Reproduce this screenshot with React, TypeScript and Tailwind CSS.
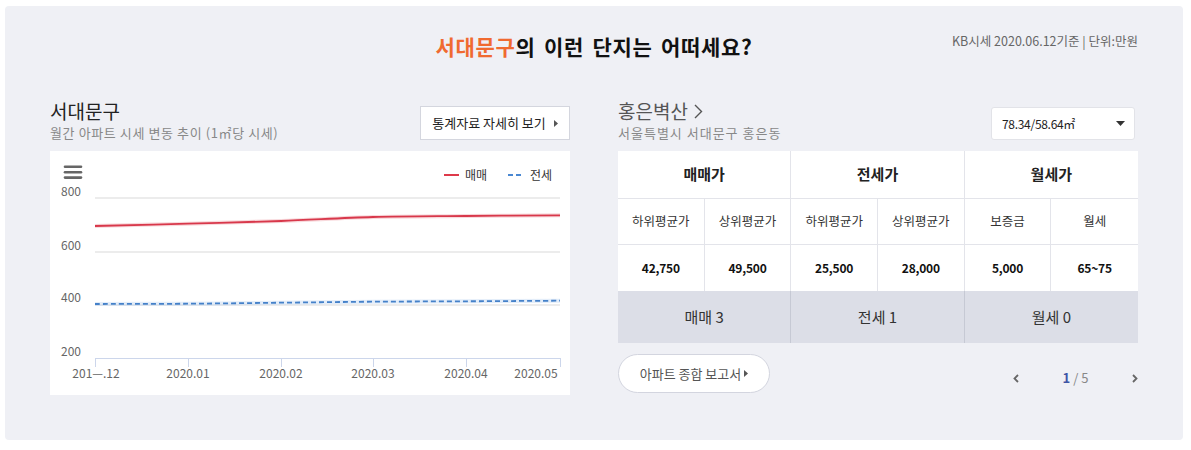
import React from 'react';

const FONT = "font-['Noto_Sans_CJK_KR','Noto_Sans',sans-serif]";

const xs = [45, 138, 231, 323, 416, 510];
const saleYs = [75, 72.7, 70, 66, 65, 64.3];
const jeonseYs = [153, 152.7, 151.7, 150.7, 150.3, 149.7];

function smoothPath(ys: number[]) {
  const pts = xs.map((x, i) => [x, ys[i]]);
  let d = `M${pts[0][0]},${pts[0][1]}`;
  for (let i = 0; i < pts.length - 1; i++) {
    const p0 = pts[i - 1] ?? pts[i];
    const p1 = pts[i];
    const p2 = pts[i + 1];
    const p3 = pts[i + 2] ?? p2;
    const c1x = p1[0] + (p2[0] - p0[0]) / 6;
    const c1y = p1[1] + (p2[1] - p0[1]) / 6;
    const c2x = p2[0] - (p3[0] - p1[0]) / 6;
    const c2y = p2[1] - (p3[1] - p1[1]) / 6;
    d += ` C${c1x},${c1y} ${c2x},${c2y} ${p2[0]},${p2[1]}`;
  }
  return d;
}

function TrendChart() {
  const gridYs = [47, 101, 154];
  const yLabels = [
    { t: '800', y: 45 },
    { t: '600', y: 99 },
    { t: '400', y: 151 },
    { t: '200', y: 205 },
  ];
  const xLabels = [
    { t: '201—.12', x: 46 },
    { t: '2020.01', x: 138 },
    { t: '2020.02', x: 231 },
    { t: '2020.03', x: 323 },
    { t: '2020.04', x: 416 },
    { t: '2020.05', x: 486 },
  ];
  return (
    <div className="mt-[9px] h-[244px] w-[520px] bg-white">
      <svg width="520" height="244" viewBox="0 0 520 244" className="block">
        <g stroke="#666" strokeWidth="2.6" strokeLinecap="round">
          <line x1="15" y1="15.7" x2="31" y2="15.7" />
          <line x1="15" y1="21.2" x2="31" y2="21.2" />
          <line x1="15" y1="26.6" x2="31" y2="26.6" />
        </g>
        <line x1="394" y1="24" x2="409" y2="24" stroke="#de3a4a" strokeWidth="2" />
        <text x="415" y="28.5" fontSize="12" fill="#333" fontFamily="Noto Sans CJK KR, sans-serif">매매</text>
        <line x1="458" y1="24" x2="474" y2="24" stroke="#4a88d2" strokeWidth="2" strokeDasharray="5 3" />
        <text x="480" y="28.5" fontSize="12" fill="#333" fontFamily="Noto Sans CJK KR, sans-serif">전세</text>

        {gridYs.map((y) => (
          <line key={y} x1="45" y1={y} x2="510" y2={y} stroke="#d9d9d9" strokeWidth="1" />
        ))}
        <line x1="45" y1="207.5" x2="510" y2="207.5" stroke="#ccd6eb" strokeWidth="1" />
        {xs.map((x) => (
          <line key={x} x1={x + 0.5} y1="207" x2={x + 0.5} y2="216" stroke="#ccd6eb" strokeWidth="1" />
        ))}

        {yLabels.map((l) => (
          <text key={l.t} x="11" y={l.y} fontSize="12" fill="#666" fontFamily="Noto Sans CJK KR, sans-serif">
            {l.t}
          </text>
        ))}
        {xLabels.map((l) => (
          <text key={l.t} x={l.x} y="227" fontSize="12" fill="#666" textAnchor="middle" fontFamily="Noto Sans CJK KR, sans-serif">
            {l.t}
          </text>
        ))}

        <path d={smoothPath(saleYs)} fill="none" stroke="#f2b3ba" strokeWidth="4" opacity="0.5" />
        <path d={smoothPath(saleYs)} fill="none" stroke="#d8384b" strokeWidth="1.8" />
        <path d={smoothPath(jeonseYs)} fill="none" stroke="#b9d3f0" strokeWidth="4" opacity="0.4" />
        <path d={smoothPath(jeonseYs)} fill="none" stroke="#4581c9" strokeWidth="1.8" strokeDasharray="5 3" />
      </svg>
    </div>
  );
}

function SmallTriangle({ className = '' }: { className?: string }) {
  return (
    <svg width="4" height="7" viewBox="0 0 4 7" className={className}>
      <path d="M0 0 L4 3.5 L0 7 Z" fill="#555" />
    </svg>
  );
}

function PriceTable() {
  const groups = ['매매가', '전세가', '월세가'];
  const subs = ['하위평균가', '상위평균가', '하위평균가', '상위평균가', '보증금', '월세'];
  const values = ['42,750', '49,500', '25,500', '28,000', '5,000', '65~75'];
  const counts = ['매매 3', '전세 1', '월세 0'];
  return (
    <div className="mt-[9px] grid w-[520px] grid-cols-6 bg-white">
      {groups.map((g, i) => (
        <div
          key={g}
          className={`col-span-2 flex h-[48px] items-center justify-center border-b border-[#e3e4ea] text-[15px] font-bold text-[#222] ${i < 2 ? 'border-r' : ''}`}
        >
          {g}
        </div>
      ))}
      {subs.map((s, i) => (
        <div
          key={i}
          className={`flex h-[46px] items-center justify-center border-b border-[#e3e4ea] text-[12.5px] text-[#333] ${i < 5 ? 'border-r' : ''}`}
        >
          {s}
        </div>
      ))}
      {values.map((v, i) => (
        <div
          key={i}
          className={`flex h-[46px] items-center justify-center border-[#e3e4ea] text-[12px] font-bold tracking-[-0.2px] text-[#111] ${i < 5 ? 'border-r' : ''}`}
        >
          {v}
        </div>
      ))}
      {counts.map((c, i) => (
        <div
          key={c}
          className={`col-span-2 flex h-[52px] items-center justify-center border-[#c6c9d4] bg-[#dcdee7] text-[15px] text-[#333] ${i < 2 ? 'border-r' : ''}`}
        >
          {c}
        </div>
      ))}
    </div>
  );
}

export default function App() {
  return (
    <div className={`h-[450px] w-[1191px] bg-white pl-[5px] pt-[6px] ${FONT}`}>
      <div className="h-[434px] w-[1178px] rounded-[4px] bg-[#eff0f5] px-[45px] pt-[25px]">
        <div className="grid grid-cols-[1fr_auto_1fr] items-start">
          <div />
          <h2 className="text-[21px] font-bold leading-[30px] tracking-[0.7px] text-[#111] [word-spacing:3px]">
            <span className="text-[#f06a30]">서대문구</span>의 이런 단지는 어떠세요?
          </h2>
          <div className="mt-[2px] text-right text-[12.5px] leading-[16px] text-[#666]">
            KB시세 2020.06.12기준 | 단위:만원
          </div>
        </div>

        <div className="mt-[38px] flex gap-[48px]">
          <section className="w-[520px]">
            <div className="flex items-start justify-between">
              <div>
                <h3 className="text-[19px] leading-[24px] text-[#222]">서대문구</h3>
                <p className="mt-px text-[13px] leading-[18px] tracking-[0.6px] text-[#888]">
                  월간 아파트 시세 변동 추이 (1㎡당 시세)
                </p>
              </div>
              <button className="mt-[7px] flex h-[34px] w-[150px] items-center justify-center gap-[8px] border border-[#d4d6de] bg-white text-[13px] text-[#222]">
                통계자료 자세히 보기
                <SmallTriangle />
              </button>
            </div>
            <TrendChart />
          </section>

          <section className="w-[520px]">
            <div className="flex items-start justify-between">
              <div>
                <h3 className="flex items-center gap-[6px] text-[19px] leading-[24px] text-[#555]">
                  홍은벽산
                  <svg width="9" height="15" viewBox="0 0 9 15">
                    <path d="M1 1 L7.5 7.5 L1 14" fill="none" stroke="#555" strokeWidth="1.4" />
                  </svg>
                </h3>
                <p className="mt-px text-[13px] leading-[18px] tracking-[1px] text-[#888]">서울특별시 서대문구 홍은동</p>
              </div>
              <div className="mr-[3px] mt-[8px] flex h-[33px] w-[144px] items-center justify-between rounded-[3px] border border-[#e2e3e8] bg-white pl-[10px] pr-[9px] text-[12px] tracking-[-0.3px] text-[#222]">
                <span>78.34/58.64㎡</span>
                <svg width="9" height="5" viewBox="0 0 9 5">
                  <path d="M0 0 L9 0 L4.5 5 Z" fill="#333" />
                </svg>
              </div>
            </div>
            <PriceTable />
            <div className="mt-[11px] flex items-center justify-between">
              <button className="flex h-[39px] w-[152px] items-center justify-center gap-[3px] rounded-full border border-[#d3d5df] bg-white text-[13px] text-[#555]">
                아파트 종합 보고서
                <SmallTriangle />
              </button>
              <div className="mt-[9px] flex w-[125px] items-center justify-between">
                <svg width="6" height="9" viewBox="0 0 6 9">
                  <path d="M5 1 L1.5 4.5 L5 8" fill="none" stroke="#666" strokeWidth="1.8" />
                </svg>
                <span className="text-[13px] text-[#888]">
                  <b className="font-bold text-[#3f55a5]">1</b> / 5
                </span>
                <svg width="6" height="9" viewBox="0 0 6 9">
                  <path d="M1 1 L4.5 4.5 L1 8" fill="none" stroke="#666" strokeWidth="1.8" />
                </svg>
              </div>
            </div>
          </section>
        </div>
      </div>
    </div>
  );
}
